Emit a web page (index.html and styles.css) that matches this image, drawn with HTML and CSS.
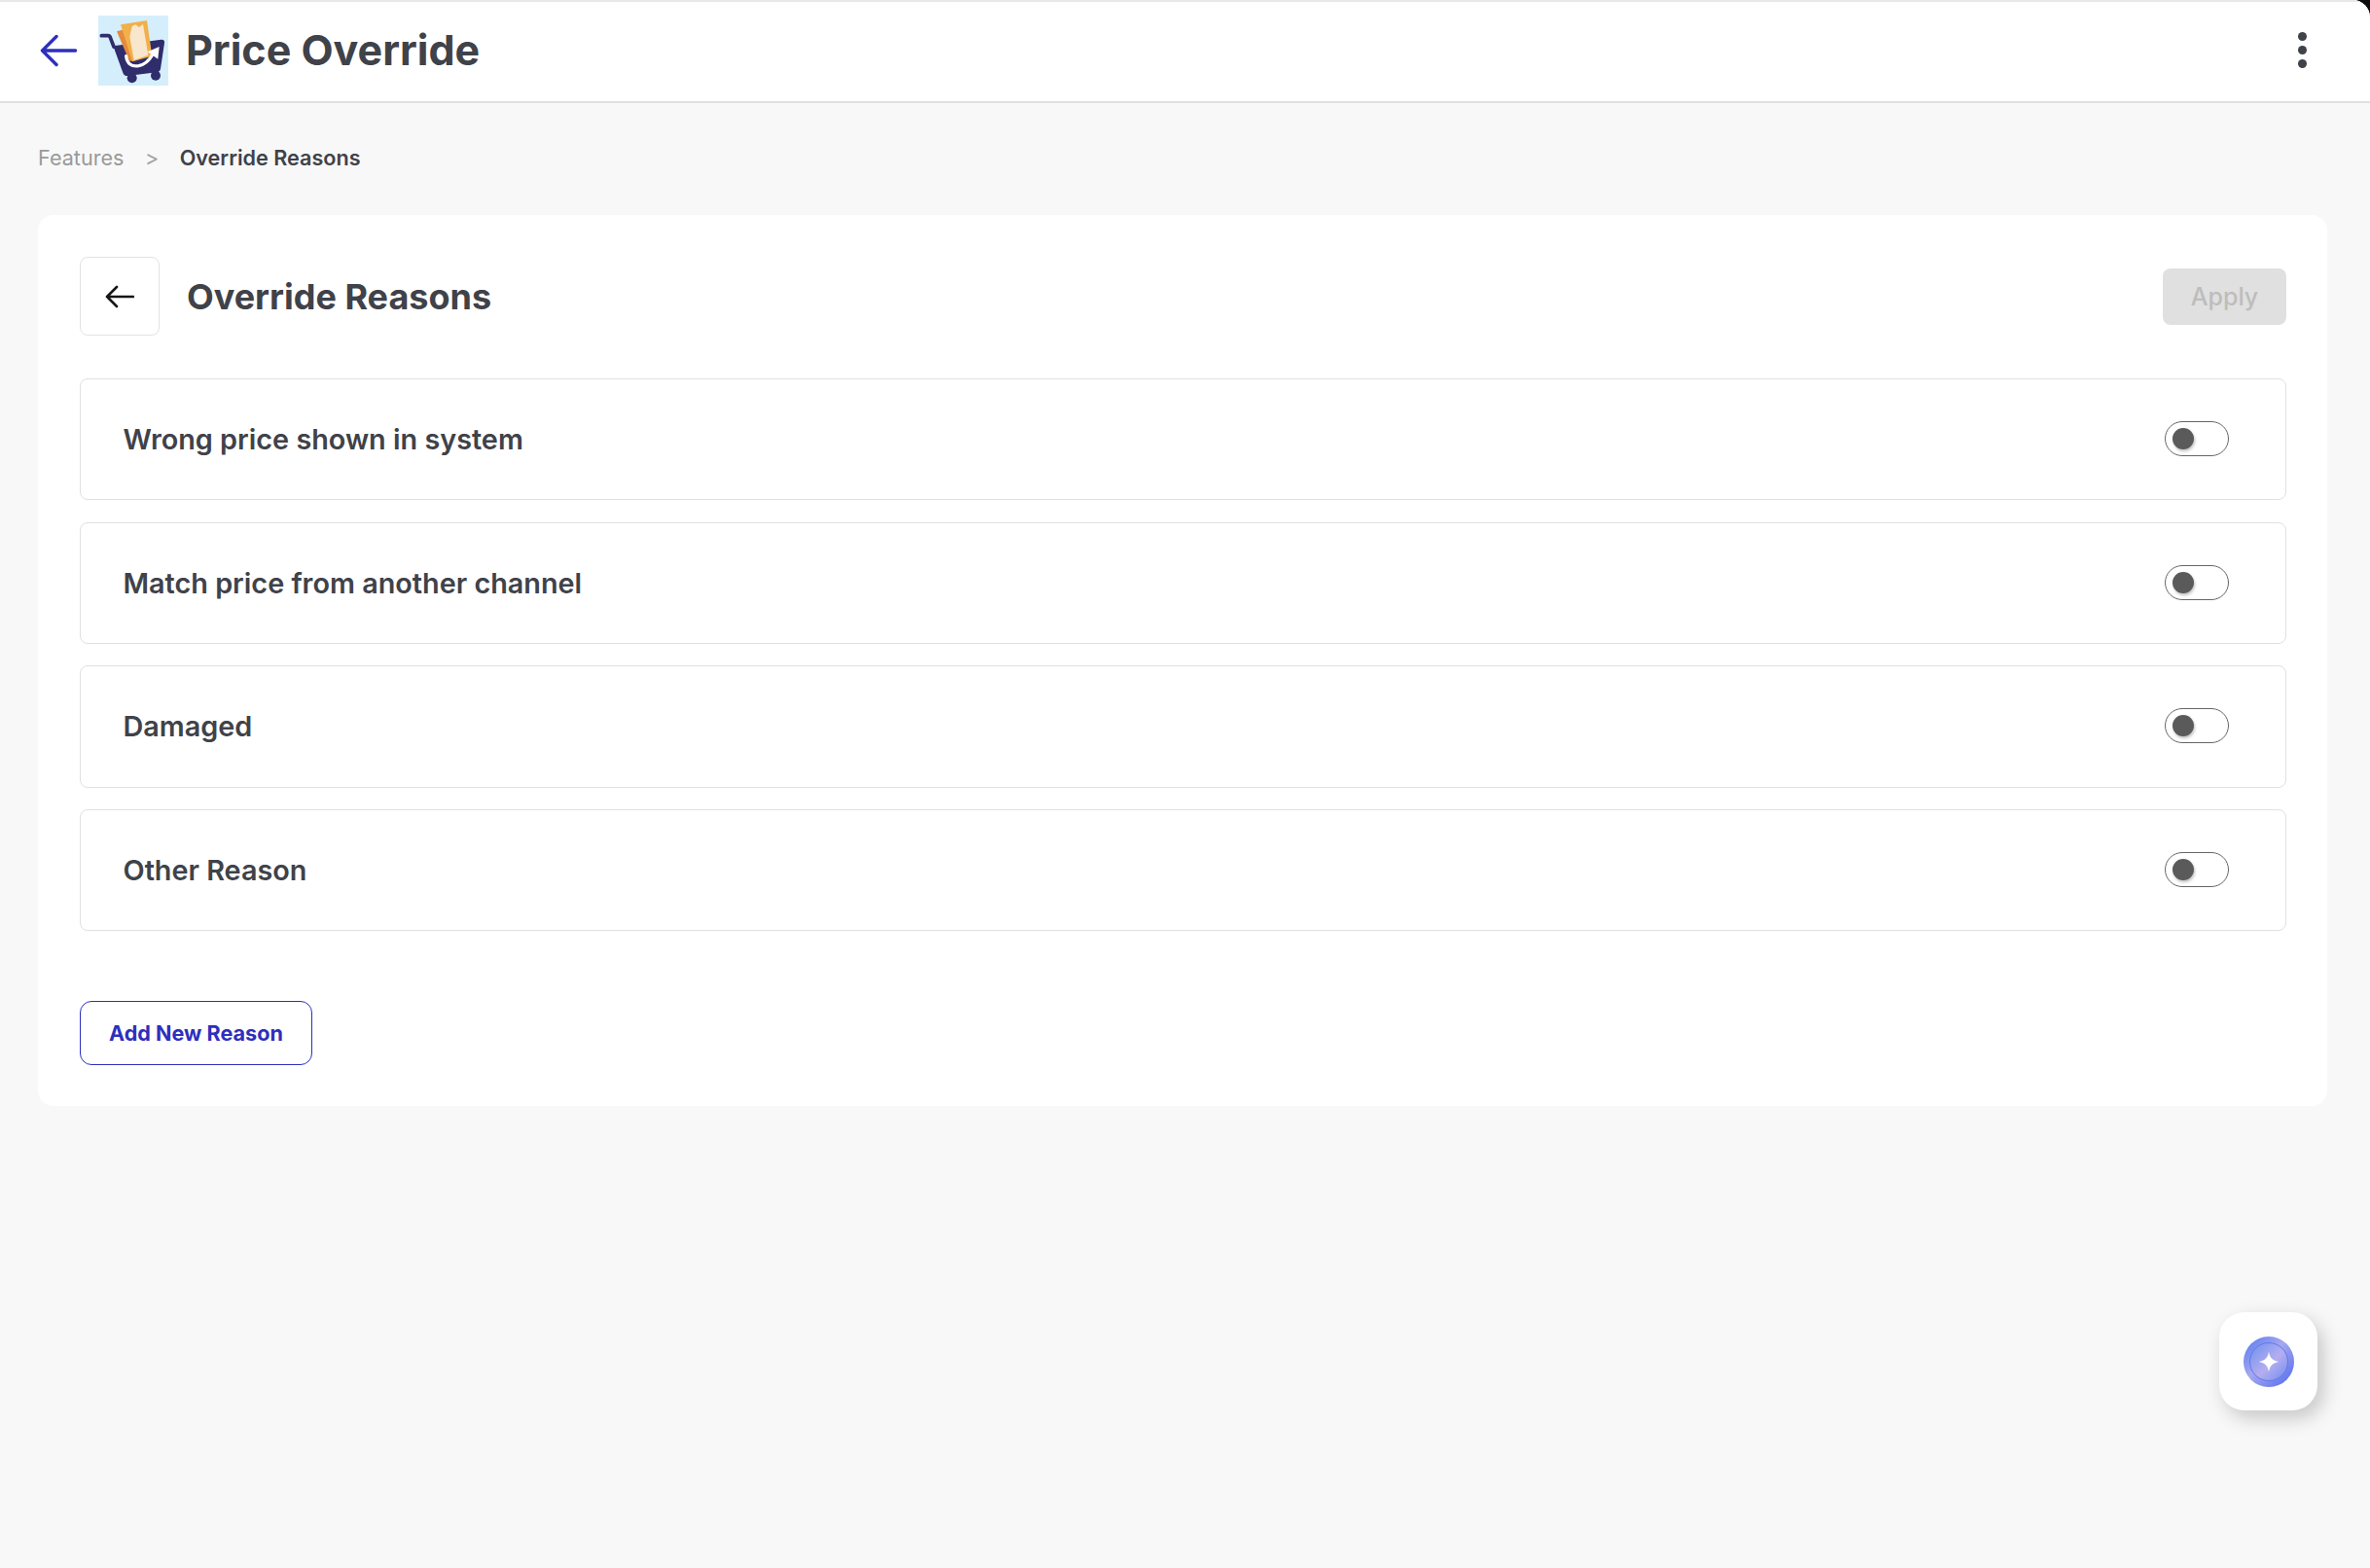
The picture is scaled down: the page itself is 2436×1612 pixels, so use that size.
FILE: index.html
```html
<!DOCTYPE html>
<html lang="en">
<head>
<meta charset="utf-8">
<title>Price Override</title>
<link rel="stylesheet" href="styles.css">
</head>
<body>
<div class="app">
  <header class="topbar">
    <svg class="nav-back" viewBox="0 0 38 34" fill="none" stroke="#2d2fbd" stroke-width="3.4" stroke-linecap="round" stroke-linejoin="round"><path d="M36.5 17H2.5M17 2.5 2.5 17 17 31.5"/></svg>
    <svg class="logo" viewBox="0 0 216 216">
      <rect width="216" height="216" fill="#d5eefb"/>
      <path d="M10 62H30Q36 62 38 70L48 96" fill="none" stroke="#2f2d6b" stroke-width="11" stroke-linecap="round"/>
      <path d="M46 94 194 74Q206 73 204 85L192 164Q190 174 180 175L90 186Q80 187 76 176Z" fill="#2f2d6b"/>
      <path d="M57 49 82 42 112 140 96 140Z" fill="#e58a3c"/>
      <path d="M69 28 150 15 166 125 105 142Z" fill="#f2b04a"/>
      <path d="M104 33 115 28 126 36 138 27 154 122 110 138 97 65Z" fill="#f8e6cd"/>
      <path d="M86 125Q90 160 125 155 150 150 168 120" fill="none" stroke="#fff" stroke-width="10" stroke-linecap="round"/>
      <path d="M152 112 188 96 184 134Z" fill="#fff"/>
      <circle cx="104" cy="193" r="15" fill="#2f2d6b"/>
      <circle cx="177" cy="185" r="15" fill="#2f2d6b"/>
    </svg>
    <h1 class="app-title">Price Override</h1>
    <div class="kebab"><span></span><span></span><span></span></div>
  </header>

  <main class="content">
    <nav class="crumbs">
      <span class="crumb-link">Features</span>
      <span class="crumb-sep">&gt;</span>
      <span class="crumb-current">Override Reasons</span>
    </nav>

    <section class="card">
      <div class="card-head">
        <button class="icon-btn">
          <svg viewBox="0 0 30 24" fill="none" stroke="#161616" stroke-width="2.6" stroke-linecap="round" stroke-linejoin="round"><path d="M29 12H2M12 2 2 12 12 22"/></svg>
        </button>
        <h2 class="card-title">Override Reasons</h2>
        <button class="apply">Apply</button>
      </div>

      <div class="reasons">
        <div class="reason"><span class="reason-label">Wrong price shown in system</span><span class="toggle"><i class="knob"></i></span></div>
        <div class="reason"><span class="reason-label">Match price from another channel</span><span class="toggle"><i class="knob"></i></span></div>
        <div class="reason"><span class="reason-label">Damaged</span><span class="toggle"><i class="knob"></i></span></div>
        <div class="reason"><span class="reason-label">Other Reason</span><span class="toggle"><i class="knob"></i></span></div>
      </div>

      <button class="add">Add New Reason</button>
    </section>
  </main>

  <button class="fab">
    <svg viewBox="0 0 52 52">
      <defs>
        <linearGradient id="ring" x1="0" y1="0" x2="1" y2="1">
          <stop offset="0" stop-color="#5478f0"/>
          <stop offset="0.45" stop-color="#a5a8f0"/>
          <stop offset="1" stop-color="#5068ec"/>
        </linearGradient>
        <linearGradient id="core" x1="0" y1="0" x2="1" y2="1">
          <stop offset="0" stop-color="#6a90f0"/>
          <stop offset="0.55" stop-color="#b5aef0"/>
          <stop offset="1" stop-color="#6c8cf0"/>
        </linearGradient>
      </defs>
      <circle cx="26" cy="26" r="26" fill="url(#ring)"/>
      <circle cx="26" cy="26" r="19.5" fill="url(#core)" stroke="#6478e6" stroke-width="1"/>
      <path d="M26 15.5C27 22 30 25 36.5 26 30 27 27 30 26 36.5 25 30 22 27 15.5 26 22 25 25 22 26 15.5Z" fill="#fff"/>
    </svg>
  </button>
</div>
</body>
</html>
```
FILE: styles.css
```css
* { box-sizing: border-box; }
html { background: #0c0c0c; }
body { margin: 0; font-family: Inter, "Liberation Sans", sans-serif; color: #3f4249; }
.app { position: relative; min-height: 1612px; background: #f8f8f8; border-top-right-radius: 18px; overflow: hidden; }

.topbar { display: flex; align-items: center; height: 106px; background: #fff; border-top: 2px solid #e8e8e8; border-bottom: 2px solid #e0e0e0; padding: 0 39px 3px 41px; }
.nav-back { width: 38px; height: 34px; margin-right: 22px; flex: none; }
.logo { width: 72px; height: 72px; margin-right: 18px; flex: none; }
.app-title { margin: 0; font-size: 43px; line-height: 1; font-weight: 700; color: #3f4249; }
.kebab { margin-left: auto; display: flex; flex-direction: column; gap: 4.4px; margin-right: 26px; }
.kebab span { width: 9.4px; height: 9.4px; border-radius: 50%; background: #3f4249; }

.content { padding: 43px 44px 0 39px; }
.crumbs { display: flex; align-items: center; height: 26px; font-size: 21.6px; line-height: 26px; margin-bottom: 46px; }
.crumb-link { color: #9a9a9a; }
.crumb-sep { color: #a3a3a3; margin: 0 21.5px; }
.crumb-current { font-weight: 600; color: #3f4249; }

.card { background: #fff; border-radius: 16px; padding: 43px 42px 43px 43px; height: 916px; }
.card-head { display: flex; align-items: center; height: 81px; margin-bottom: 44px; }
.icon-btn { width: 82px; height: 81px; flex: none; padding: 0; display: flex; align-items: center; justify-content: center; background: #fff; border: 1.5px solid #e3e3e3; border-radius: 8px; margin-right: 28px; }
.icon-btn svg { width: 30px; height: 24px; }
.card-title { margin: 0; font-size: 36px; line-height: 1; font-weight: 700; color: #3f4249; }
.apply { margin-left: auto; width: 127px; height: 58px; border: 0; border-radius: 8px; background: #e0e0e0; color: #bdbdbd; font: 500 25px Inter, "Liberation Sans", sans-serif; padding: 0; }

.reasons { display: flex; flex-direction: column; gap: 22.2px; }
.reason { height: 125.4px; display: flex; align-items: center; justify-content: space-between; border: 1.5px solid #e0e0e0; border-radius: 8px; padding: 0 58px 0 43.5px; background: #fff; }
.reason-label { font-size: 28.8px; font-weight: 600; color: #3f4249; }
.toggle { position: relative; display: block; width: 66px; height: 36px; margin-top: -1px; border: 1.5px solid #666; border-radius: 18px; background: #fff; }
.knob { position: absolute; left: 7px; top: 6px; width: 22px; height: 22px; border-radius: 50%; background: #5a5a5a; box-shadow: 1px 2px 3px rgba(0,0,0,.25); }

.add { display: block; margin-top: 71.5px; width: 239px; height: 66px; background: #fff; border: 1.5px solid #2d2fbd; border-radius: 12px; color: #2d2fbd; font: 700 21.6px Inter, "Liberation Sans", sans-serif; padding: 0; }

.fab { position: absolute; left: 2281px; top: 1349px; width: 101px; height: 101px; display: flex; align-items: center; justify-content: center; padding: 0; border: 0; border-radius: 26px; background: #fff; box-shadow: 6px 8px 20px rgba(0,0,0,.2); }
.fab svg { width: 52px; height: 52px; }
```
